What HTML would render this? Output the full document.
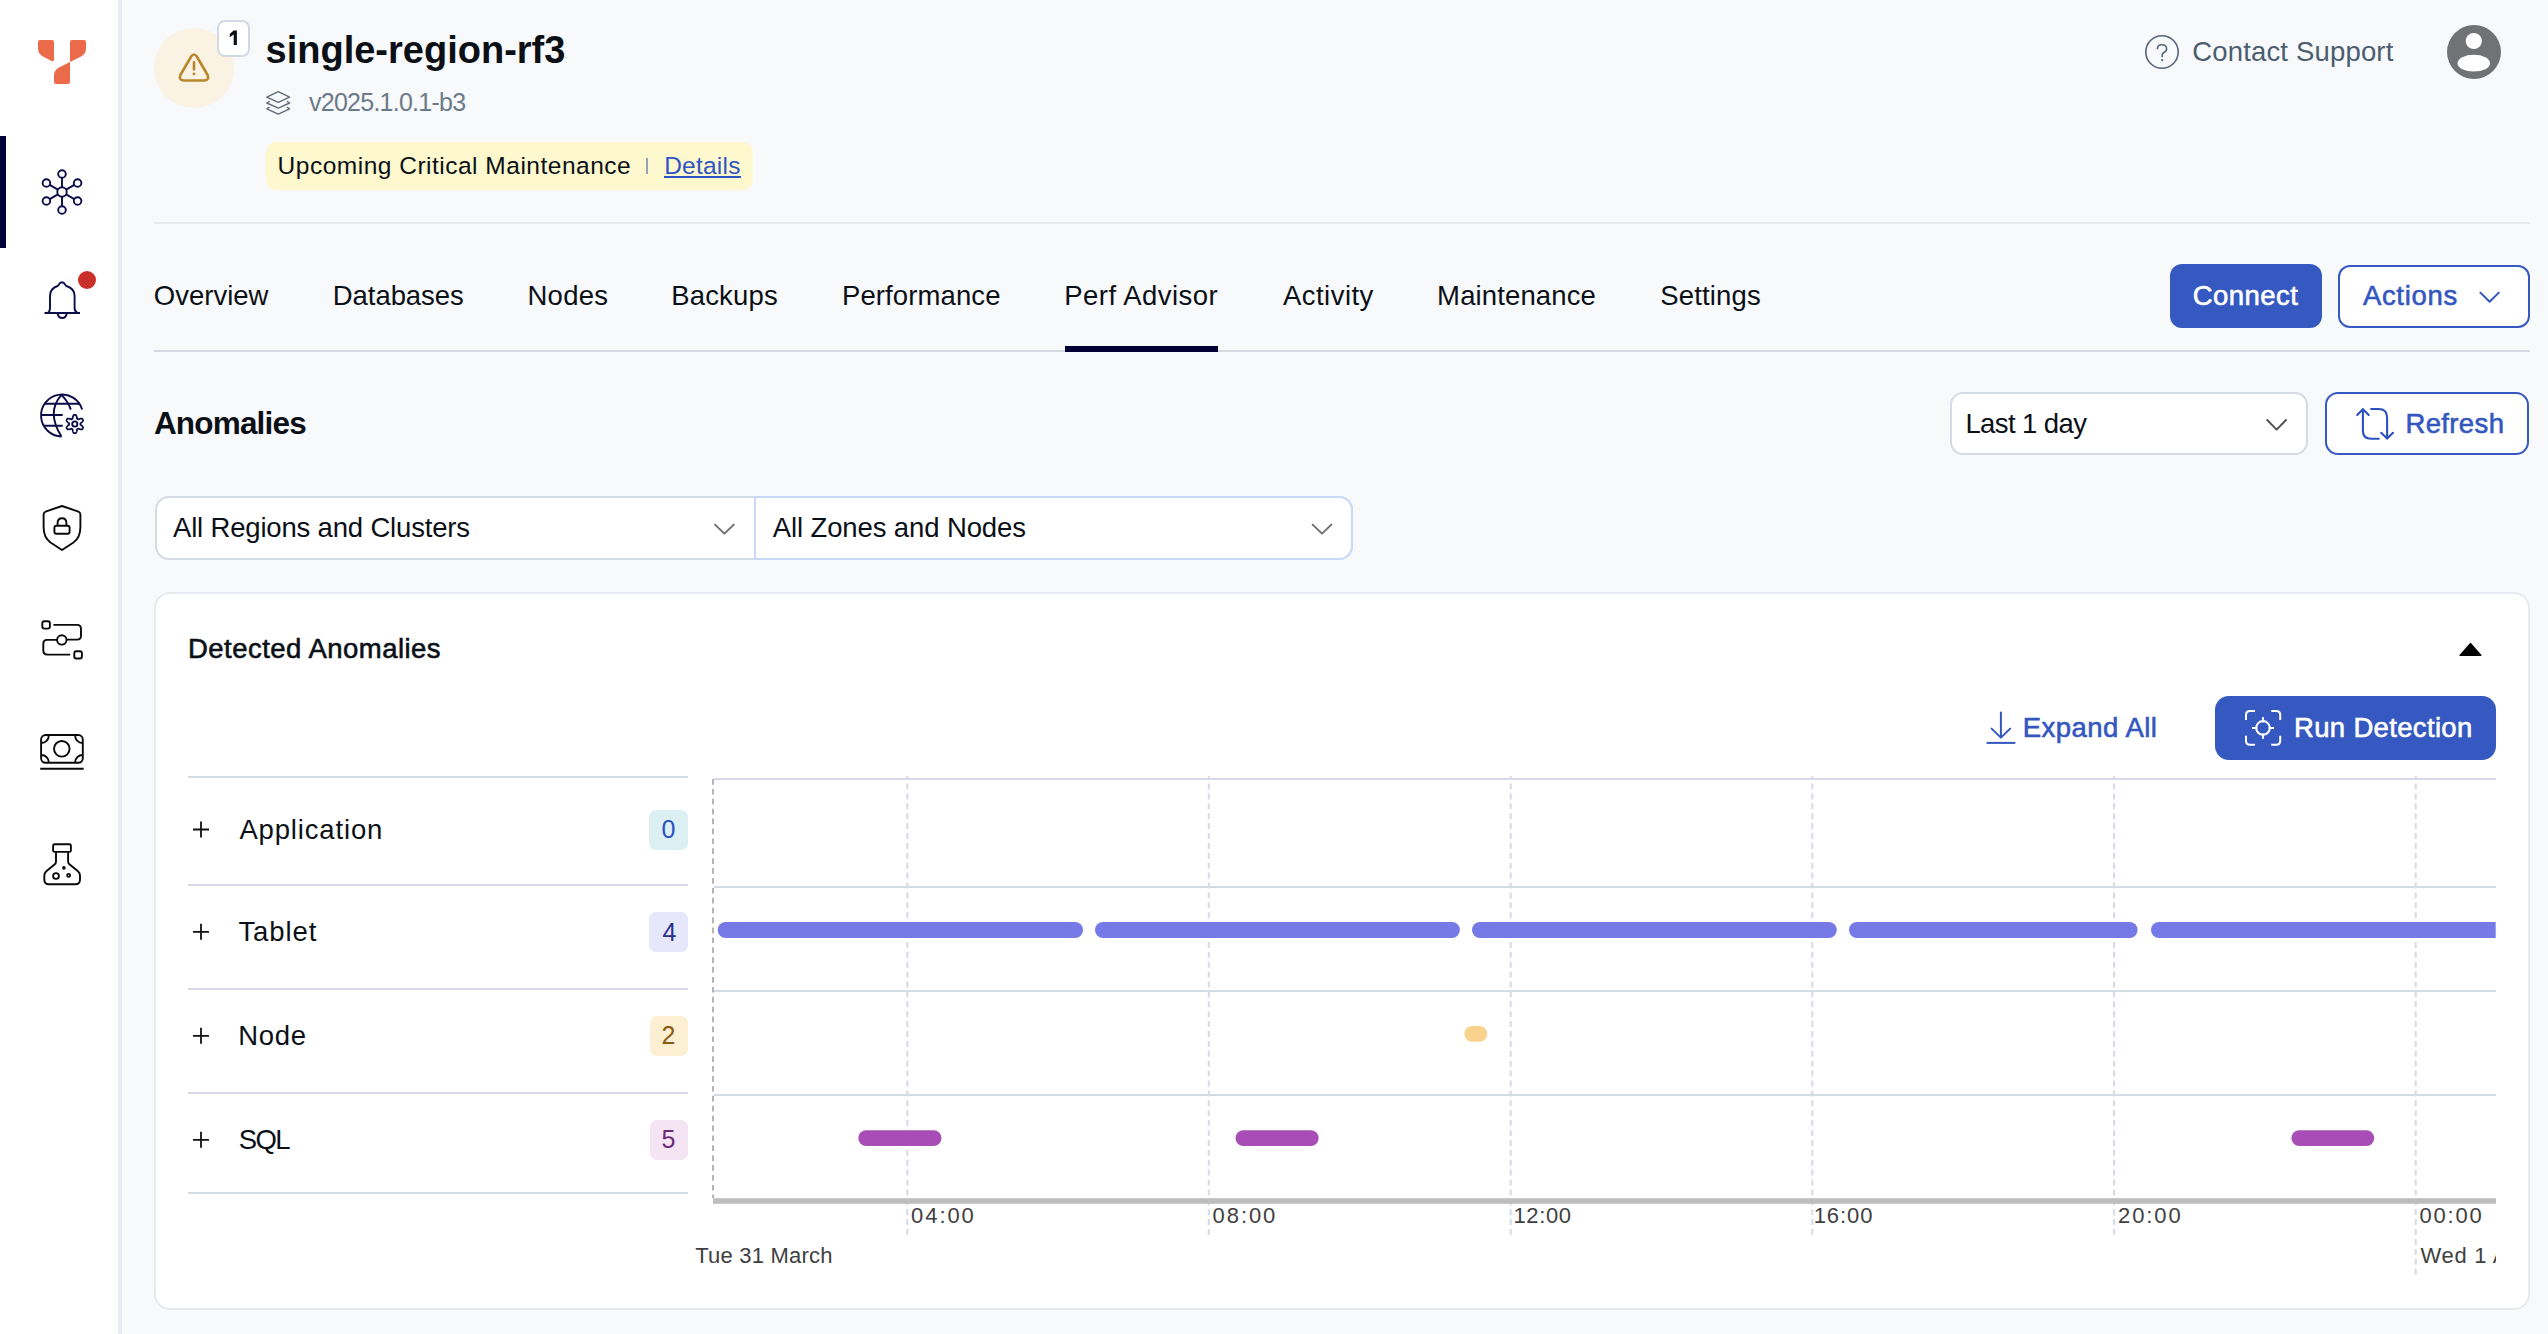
<!DOCTYPE html>
<html><head><meta charset="utf-8"><style>
html,body{margin:0;padding:0}
body{width:2548px;height:1334px;overflow:hidden;position:relative;background:#f8f9fb;font-family:"Liberation Sans",sans-serif}
.a{position:absolute;box-sizing:border-box}
.t{position:absolute;white-space:nowrap}
.ln{position:absolute;background:#d5dbe3}
.ov{position:absolute;left:0;top:0}
</style></head><body>
<div class="a" style="left:0;top:0;width:118px;height:1334px;background:#fff"></div>
<div class="a" style="left:118px;top:0;width:4px;height:1334px;background:#e8ebf0"></div>
<div class="a" style="left:0;top:136px;width:6px;height:112px;background:#03033c"></div>
<div class="a" style="left:154px;top:28px;width:80px;height:80px;border-radius:50%;background:#faf3e3"></div>
<div class="a" style="left:217px;top:20px;width:33px;height:37px;border-radius:8px;border:2px solid #d3d9e2;background:#fff"></div>
<div class="a" style="left:266px;top:142px;width:487px;height:48px;border-radius:10px;background:#fef8cf"></div>
<div class="a" style="left:646px;top:158px;width:2px;height:16px;background:#95a3b5"></div>
<div class="a" style="left:664.2px;top:176px;width:76.7px;height:2px;background:#2f55c4"></div>
<div class="a" style="left:154px;top:221.5px;width:2376px;height:2px;background:#e6e9ee"></div>
<div class="a" style="left:154px;top:350px;width:2376px;height:2px;background:#d5dae2"></div>
<div class="a" style="left:1065px;top:346px;width:153px;height:6px;background:#000037"></div>
<div class="a" style="left:2170px;top:264px;width:152px;height:64px;border-radius:12px;background:#3559c0"></div>
<div class="a" style="left:2338px;top:264.5px;width:191.5px;height:63px;border-radius:12px;border:2px solid #3559c0;background:#fff"></div>
<div class="a" style="left:1949.6px;top:392.4px;width:358.6px;height:62.3px;border-radius:13px;border:2px solid #d5dbe3;background:#fff"></div>
<div class="a" style="left:2325.2px;top:392.4px;width:204.3px;height:62.3px;border-radius:13px;border:2px solid #3559c0;background:#fff"></div>
<div class="a" style="left:154.5px;top:496px;width:1198.5px;height:64px;border-radius:14px;border:2px solid #d5dbe3;background:#fff"></div>
<div class="a" style="left:754px;top:496px;width:599px;height:64px;border-radius:0 14px 14px 0;border:2px solid #cad9fb;background:#fff"></div>
<div class="a" style="left:154.2px;top:592px;width:2375.8px;height:718.2px;border-radius:16px;border:2px solid #e6e9ee;background:#fff"></div>
<div class="a" style="left:2215px;top:696px;width:281px;height:63.6px;border-radius:14px;background:#3559c0"></div>
<div class="a" style="left:649px;top:810px;width:39px;height:40px;border-radius:7px;background:#dcf0f4"></div>
<div class="a" style="left:649px;top:912.2px;width:39px;height:39.5px;border-radius:7px;background:#e7e7fb"></div>
<div class="a" style="left:650px;top:1016px;width:38px;height:39.6px;border-radius:7px;background:#fdefd2"></div>
<div class="a" style="left:650px;top:1120px;width:38px;height:39.5px;border-radius:7px;background:#f4e4f4"></div>
<div class="ln" style="left:188px;top:775.6px;width:500px;height:2px"></div><div class="ln" style="left:188px;top:883.6px;width:500px;height:2px"></div><div class="ln" style="left:188px;top:987.8px;width:500px;height:2px"></div><div class="ln" style="left:188px;top:1091.7px;width:500px;height:2px"></div><div class="ln" style="left:188px;top:1191.9px;width:500px;height:2px"></div><div class="ln" style="left:714px;top:778.0px;width:1782px;height:2px"></div><div class="ln" style="left:714px;top:885.8px;width:1782px;height:2px"></div><div class="ln" style="left:714px;top:989.7px;width:1782px;height:2px"></div><div class="ln" style="left:714px;top:1093.7px;width:1782px;height:2px"></div>
<svg class="ov" width="2548" height="1334" viewBox="0 0 2548 1334"><g stroke="#d6dce5" stroke-width="2.1" stroke-dasharray="6 3.9" stroke-dashoffset="2.4"><path d="M907.3,776 V1236"/><path d="M1208.8,776 V1236"/><path d="M1510.7,776 V1236"/><path d="M1812.3,776 V1236"/><path d="M2114.1,776 V1236"/><path d="M2415.7,776 V1276"/></g><path d="M713,779 V1198" stroke="#b5b5b5" stroke-width="2" stroke-dasharray="5.7 4.2"/><rect x="713" y="1198.2" width="1783" height="5.6" fill="#bdbdbd"/><rect x="717.7" y="922" width="365.29999999999995" height="16" rx="8.0" fill="#767ae6"/><rect x="1095" y="922" width="364.9000000000001" height="16" rx="8.0" fill="#767ae6"/><rect x="1472" y="922" width="364.79999999999995" height="16" rx="8.0" fill="#767ae6"/><rect x="1849" y="922" width="288.5999999999999" height="16" rx="8.0" fill="#767ae6"/><path d="M2159.0,922 H2495.7 V938 H2159.0 A8.0,8.0 0 0 1 2159.0,922Z" fill="#767ae6"/><rect x="1464.4" y="1026" width="22.899999999999864" height="15.700000000000045" rx="7.850000000000023" fill="#f8d28e"/><rect x="858.3" y="1130.2" width="83.20000000000005" height="15.799999999999955" rx="7.899999999999977" fill="#a84db6"/><rect x="1235.5" y="1130.2" width="83.20000000000005" height="15.799999999999955" rx="7.899999999999977" fill="#a84db6"/><rect x="2291.4" y="1130.2" width="82.79999999999973" height="15.799999999999955" rx="7.899999999999977" fill="#a84db6"/></svg>

<svg class="ov" width="2548" height="1334" viewBox="0 0 2548 1334">
<!-- logo -->
<g fill="#ea6a4a">
<path d="M40,40 H52 Q54,40 54,42 V59.5 Q54,62 51.5,61 L43,56.6 Q38,54 38,48.5 V42 Q38,40 40,40Z"/>
<path d="M72,40 H84 Q86,40 86,42 V48.5 Q86,54 81,56.6 L70,62 V42 Q70,40 72,40Z"/>
<path d="M70,62 V82 Q70,84 68,84 H56 Q54,84 54,82 V75.5 Q54,70 59,67.6 Z"/>
</g>
<!-- cluster icon -->
<g fill="none" stroke="#0c0c48" stroke-width="1.9">
<circle cx="62" cy="192" r="4.7"/>
<circle cx="62" cy="174" r="3.8"/><circle cx="62" cy="210" r="3.8"/>
<circle cx="46.4" cy="183" r="3.8"/><circle cx="77.6" cy="183" r="3.8"/>
<circle cx="46.4" cy="201" r="3.8"/><circle cx="77.6" cy="201" r="3.8"/>
<path d="M62,177.8 V187.3 M62,196.7 V206.2 M49.7,184.9 L57.9,189.6 M66.1,194.4 L74.3,199.1 M74.3,184.9 L66.1,189.6 M57.9,194.4 L49.7,199.1"/>
</g>
<!-- bell -->
<g fill="none" stroke="#0c0c48" stroke-width="1.9" stroke-linejoin="round">
<path d="M44.5,313 H80"/>
<path d="M47.5,313 Q50,311.5 50,308 V296 Q50,288.5 57.5,286 Q58.5,285.6 58.8,284.6 Q60,282.2 62,282.2 Q64,282.2 65.2,284.6 Q65.5,285.6 66.5,286 Q74.6,288.5 74.6,296 V308 Q74.6,311.5 77.5,313"/>
<path d="M57.6,313.5 Q58.5,318 62.2,318 Q65.9,318 66.8,313.5"/>
</g>
<circle cx="87" cy="280" r="9" fill="#c9302a"/>
<!-- globe -->
<g fill="none" stroke="#0c0c48" stroke-width="1.9" stroke-linecap="butt">
<path d="M82.2,409.6 A21,21 0 1 0 61.5,436.5"/>
<path d="M61.5,394.8 Q46,412 61.5,436.5"/>
<path d="M61.5,394.8 Q68.5,402 70.8,409.6"/>
<path d="M44.7,403.7 H79.2 M41.2,415 H62.7 M44,425.8 H62.7"/>
<path d="M80.50,424.00 L80.50,423.85 L80.49,423.70 L80.48,423.55 L80.47,423.40 L80.65,423.23 L80.88,423.04 L81.13,422.83 L81.40,422.60 L81.67,422.35 L81.95,422.08 L82.21,421.80 L82.46,421.51 L82.68,421.21 L82.87,420.90 L83.02,420.59 L83.11,420.30 L83.01,420.08 L82.91,419.87 L82.80,419.66 L82.68,419.45 L82.56,419.25 L82.43,419.04 L82.30,418.85 L82.16,418.65 L81.86,418.58 L81.52,418.56 L81.16,418.57 L80.79,418.61 L80.41,418.68 L80.03,418.77 L79.66,418.87 L79.31,418.99 L78.98,419.11 L78.67,419.22 L78.39,419.32 L78.15,419.39 L78.03,419.30 L77.90,419.22 L77.78,419.14 L77.65,419.06 L77.52,418.99 L77.39,418.92 L77.25,418.86 L77.12,418.79 L77.06,418.55 L77.00,418.26 L76.95,417.93 L76.88,417.59 L76.81,417.22 L76.72,416.85 L76.61,416.48 L76.48,416.12 L76.32,415.78 L76.15,415.46 L75.96,415.17 L75.75,414.95 L75.51,414.93 L75.28,414.91 L75.04,414.90 L74.80,414.90 L74.56,414.90 L74.32,414.91 L74.09,414.93 L73.85,414.95 L73.64,415.17 L73.45,415.46 L73.28,415.78 L73.12,416.12 L72.99,416.48 L72.88,416.85 L72.79,417.22 L72.72,417.59 L72.65,417.93 L72.60,418.26 L72.54,418.55 L72.48,418.79 L72.35,418.86 L72.21,418.92 L72.08,418.99 L71.95,419.06 L71.82,419.14 L71.70,419.22 L71.57,419.30 L71.45,419.39 L71.21,419.32 L70.93,419.22 L70.62,419.11 L70.29,418.99 L69.94,418.87 L69.57,418.77 L69.19,418.68 L68.81,418.61 L68.44,418.57 L68.08,418.56 L67.74,418.58 L67.44,418.65 L67.30,418.85 L67.17,419.04 L67.04,419.25 L66.92,419.45 L66.80,419.66 L66.69,419.87 L66.59,420.08 L66.49,420.30 L66.58,420.59 L66.73,420.90 L66.92,421.21 L67.14,421.51 L67.39,421.80 L67.65,422.08 L67.93,422.35 L68.20,422.60 L68.47,422.83 L68.72,423.04 L68.95,423.23 L69.13,423.40 L69.12,423.55 L69.11,423.70 L69.10,423.85 L69.10,424.00 L69.10,424.15 L69.11,424.30 L69.12,424.45 L69.13,424.60 L68.95,424.77 L68.72,424.96 L68.47,425.17 L68.20,425.40 L67.93,425.65 L67.65,425.92 L67.39,426.20 L67.14,426.49 L66.92,426.79 L66.73,427.10 L66.58,427.41 L66.49,427.70 L66.59,427.92 L66.69,428.13 L66.80,428.34 L66.92,428.55 L67.04,428.75 L67.17,428.96 L67.30,429.15 L67.44,429.35 L67.74,429.42 L68.08,429.44 L68.44,429.43 L68.81,429.39 L69.19,429.32 L69.57,429.23 L69.94,429.13 L70.29,429.01 L70.62,428.89 L70.93,428.78 L71.21,428.68 L71.45,428.61 L71.57,428.70 L71.70,428.78 L71.82,428.86 L71.95,428.94 L72.08,429.01 L72.21,429.08 L72.35,429.14 L72.48,429.21 L72.54,429.45 L72.60,429.74 L72.65,430.07 L72.72,430.41 L72.79,430.78 L72.88,431.15 L72.99,431.52 L73.12,431.88 L73.28,432.22 L73.45,432.54 L73.64,432.83 L73.85,433.05 L74.09,433.07 L74.32,433.09 L74.56,433.10 L74.80,433.10 L75.04,433.10 L75.28,433.09 L75.51,433.07 L75.75,433.05 L75.96,432.83 L76.15,432.54 L76.32,432.22 L76.48,431.88 L76.61,431.52 L76.72,431.15 L76.81,430.78 L76.88,430.41 L76.95,430.07 L77.00,429.74 L77.06,429.45 L77.12,429.21 L77.25,429.14 L77.39,429.08 L77.52,429.01 L77.65,428.94 L77.78,428.86 L77.90,428.78 L78.03,428.70 L78.15,428.61 L78.39,428.68 L78.67,428.78 L78.98,428.89 L79.31,429.01 L79.66,429.13 L80.03,429.23 L80.41,429.32 L80.79,429.39 L81.16,429.43 L81.52,429.44 L81.86,429.42 L82.16,429.35 L82.30,429.15 L82.43,428.96 L82.56,428.75 L82.68,428.55 L82.80,428.34 L82.91,428.13 L83.01,427.92 L83.11,427.70 L83.02,427.41 L82.87,427.10 L82.68,426.79 L82.46,426.49 L82.21,426.20 L81.95,425.92 L81.67,425.65 L81.40,425.40 L81.13,425.17 L80.88,424.96 L80.65,424.77 L80.47,424.60 L80.48,424.45 L80.49,424.30 L80.50,424.15Z" stroke-linejoin="round" stroke-width="1.8"/>
<circle cx="74.8" cy="424" r="2.6"/>
</g>
<!-- shield -->
<g fill="none" stroke="#0a0a0a" stroke-width="1.9" stroke-linejoin="round">
<path d="M62,506 L45.6,511.6 Q43.6,512.4 43.6,514.6 V527 Q43.6,537.5 50.5,542.5 L62,550 L73.5,542.5 Q80.4,537.5 80.4,527 V514.6 Q80.4,512.4 78.4,511.6 Z"/>
<rect x="54.4" y="525.7" width="15.2" height="8" rx="2"/>
<path d="M57.6,525.5 V523 Q57.6,518.2 62,518.2 Q66.4,518.2 66.4,523 V525.5"/>
</g>
<!-- workflow -->
<g fill="none" stroke="#0a0a0a" stroke-width="1.9" stroke-linejoin="round">
<rect x="42.3" y="621.3" width="7.6" height="7.3" rx="2"/>
<rect x="74.3" y="651.2" width="7.6" height="7.3" rx="2"/>
<circle cx="61.8" cy="639.9" r="4.7"/>
<path d="M53.4,624.9 H77 Q81,624.9 81,628.9 V635.8 Q81,639.6 77,639.6 H66.5"/>
<path d="M57.1,639.9 H47 Q43.3,639.9 43.3,643.9 V650.6 Q43.3,654.6 47.3,654.6 H70.2"/>
</g>
<!-- money -->
<g fill="none" stroke="#0a0a0a" stroke-width="1.9">
<rect x="41.1" y="735" width="41.7" height="27.8" rx="4.5"/>
<circle cx="61.8" cy="748.8" r="7.8"/>
<path d="M48.8,735.5 A7.5,7.5 0 0 1 41.3,743 M75.1,735.5 A7.5,7.5 0 0 0 82.6,743 M48.8,762.5 A7.5,7.5 0 0 0 41.3,755 M75.1,762.5 A7.5,7.5 0 0 1 82.6,755"/>
<path d="M40.2,768.8 H83.7"/>
</g>
<!-- flask -->
<g fill="none" stroke="#0a0a0a" stroke-width="1.9" stroke-linejoin="round">
<rect x="53.1" y="844.3" width="17.8" height="7.6" rx="1.5"/>
<path d="M56,852.2 V861.5 Q56,863.4 54.5,864.6 L46.3,871.2 Q44.3,872.9 44.3,876 V879.5 Q44.3,884.3 49,884.3 H75.3 Q80,884.3 80,879.5 V876 Q80,872.9 78,871.2 L69.7,864.6 Q68.1,863.4 68.1,861.5 V852.2"/>
<circle cx="56" cy="876" r="2.9"/>
<circle cx="68.6" cy="875.4" r="1.5"/>
</g>
<circle cx="63.9" cy="867.9" r="1.8" fill="#0a0a0a"/>
<!-- warning -->
<g fill="none" stroke="#b8862b" stroke-width="2.6" stroke-linejoin="round" stroke-linecap="round">
<path d="M191.2,56.5 Q194,52.5 196.8,56.5 L207.6,75 Q209.6,80.5 203.8,80.5 H184.2 Q178.4,80.5 180.4,75 Z"/>
<path d="M194,62.4 V69.5"/>
</g>
<circle cx="194" cy="73.9" r="1.4" fill="#b8862b"/>
<path d="M233.6,30.6 H236.9 V45 H233.7 V34.5 L229.8,37.3 V34.1 Z" fill="#0b1017"/>
<!-- layers -->
<g fill="none" stroke="#5f6d7c" stroke-width="1.4" stroke-linejoin="round" stroke-linecap="round">
<path d="M278.3,91.7 L289.6,97.1 L278.3,102.3 L266.8,97.1 Z"/>
<path d="M269.2,101.6 L266.8,103 L278.3,108.2 L289.6,103 L287.4,101.6"/>
<path d="M269.2,107.4 L266.8,108.8 L278.3,114.1 L289.6,108.8 L287.4,107.4"/>
</g>
<!-- help -->
<g fill="none" stroke="#56657a" stroke-width="1.6" stroke-linecap="round">
<circle cx="2162" cy="52" r="16.2"/>
<path d="M2157.4,48.6 Q2157.6,44.8 2162,44.8 Q2166.6,44.8 2166.6,48.8 Q2166.6,51.4 2163.6,52.8 Q2162.2,53.6 2162.2,55.4 V56.4"/>
</g>
<circle cx="2162.2" cy="60.2" r="1.1" fill="#56657a"/>
<!-- avatar -->
<circle cx="2474" cy="52" r="27" fill="#707276"/>
<circle cx="2473.8" cy="41" r="8.1" fill="#fff"/>
<ellipse cx="2473.8" cy="63.2" rx="16.2" ry="8.4" fill="#fff"/>
<!-- chevrons -->
<g fill="none" stroke-width="2" stroke-linecap="round" stroke-linejoin="round">
<path d="M2480.4,292.6 L2489.6,301.8 L2498.8,292.6" stroke="#3357be"/>
<path d="M2267.2,420 L2276.6,429.6 L2286,420" stroke="#555"/>
<path d="M715,524.6 L724.4,533.6 L733.8,524.6" stroke="#6e6e6e" stroke-width="1.9"/>
<path d="M1312.6,524.6 L1322,533.6 L1331.4,524.6" stroke="#6e6e6e" stroke-width="1.9"/>
</g>
<!-- refresh -->
<g fill="none" stroke="#2c51bf" stroke-width="2.1" stroke-linecap="round" stroke-linejoin="round">
<path d="M2362.9,409.6 V430.5 Q2362.9,438.8 2371.2,438.8 H2378.8"/>
<path d="M2357.2,414.9 L2362.9,409.2 L2368.7,414.9"/>
<path d="M2371.1,409 H2378.6 Q2387.1,409 2387.1,417.5 V438.2"/>
<path d="M2381.2,432.8 L2387.1,438.6 L2393,432.8"/>
</g>
<!-- caret -->
<path d="M2470.5,643.5 L2481,655.4 H2460 Z" fill="#000" stroke="#000" stroke-width="1.2" stroke-linejoin="round"/>
<!-- expand -->
<g fill="none" stroke="#3357be" stroke-width="2" stroke-linecap="round" stroke-linejoin="round">
<path d="M2000.9,712.5 V736.8 M1991.6,728.6 L2000.9,737.6 L2010.2,728.6"/>
<path d="M1986.5,742.9 H2015.4" stroke-linecap="butt"/>
</g>
<!-- run detection -->
<g fill="none" stroke="#fff" stroke-width="2" stroke-linecap="butt" stroke-linejoin="round">
<path d="M2255,711 H2250 Q2246,711 2246,715 V720"/>
<path d="M2271.2,711 H2276.2 Q2280.2,711 2280.2,715 V720"/>
<path d="M2246,735.8 V740.8 Q2246,744.8 2250,744.8 H2255"/>
<path d="M2280.2,735.8 V740.8 Q2280.2,744.8 2276.2,744.8 H2271.2"/>
<circle cx="2263" cy="727.9" r="6.8"/>
<path d="M2263,717 V722.4 M2263,733.4 V738.8 M2252,727.9 H2257.4 M2268.6,727.9 H2274"/>
</g>
<!-- plus signs -->
<g stroke="#111" stroke-width="1.8">
<path d="M193,829.5 H209 M201,821.5 V837.5"/>
<path d="M193,931.8 H209 M201,923.8 V939.8"/>
<path d="M193,1035.8 H209 M201,1027.8 V1043.8"/>
<path d="M193,1139.8 H209 M201,1131.8 V1147.8"/>
</g>
</svg>

<div class="t" style="left:265.5px;top:31.3px;font-size:38.0px;line-height:38.0px;font-weight:700;letter-spacing:0.006px;color:#0b1017;">single-region-rf3</div>
<div class="t" style="left:309.0px;top:90.0px;font-size:25.0px;line-height:25.0px;font-weight:400;letter-spacing:-0.746px;color:#6b7a88;">v2025.1.0.1-b3</div>
<div class="t" style="left:277.6px;top:153.9px;font-size:24.5px;line-height:24.5px;font-weight:400;letter-spacing:0.5px;color:#0b1017;">Upcoming Critical Maintenance</div>
<div class="t" style="left:664.2px;top:153.8px;font-size:24.5px;line-height:24.5px;font-weight:400;letter-spacing:0.217px;color:#2f55c4;">Details</div>
<div class="t" style="left:2192.2px;top:38.2px;font-size:27.5px;line-height:27.5px;font-weight:400;letter-spacing:0.171px;color:#4b5d70;">Contact Support</div>
<div class="t" style="left:153.8px;top:282.0px;font-size:27.5px;line-height:27.5px;font-weight:400;letter-spacing:0.0px;color:#0b1017;">Overview</div>
<div class="t" style="left:332.8px;top:282.0px;font-size:27.5px;line-height:27.5px;font-weight:400;letter-spacing:-0.062px;color:#0b1017;">Databases</div>
<div class="t" style="left:527.4px;top:282.0px;font-size:27.5px;line-height:27.5px;font-weight:400;letter-spacing:0.3px;color:#0b1017;">Nodes</div>
<div class="t" style="left:671.2px;top:282.0px;font-size:27.5px;line-height:27.5px;font-weight:400;letter-spacing:0.183px;color:#0b1017;">Backups</div>
<div class="t" style="left:842.0px;top:282.0px;font-size:27.5px;line-height:27.5px;font-weight:400;letter-spacing:0.1px;color:#0b1017;">Performance</div>
<div class="t" style="left:1064.2px;top:282.0px;font-size:27.5px;line-height:27.5px;font-weight:400;letter-spacing:0.482px;color:#0b1017;">Perf Advisor</div>
<div class="t" style="left:1283.0px;top:282.0px;font-size:27.5px;line-height:27.5px;font-weight:400;letter-spacing:0.457px;color:#0b1017;">Activity</div>
<div class="t" style="left:1437.1px;top:282.0px;font-size:27.5px;line-height:27.5px;font-weight:400;letter-spacing:0.13px;color:#0b1017;">Maintenance</div>
<div class="t" style="left:1660.3px;top:282.0px;font-size:27.5px;line-height:27.5px;font-weight:400;letter-spacing:0.157px;color:#0b1017;">Settings</div>
<div class="t" style="left:2192.7px;top:281.9px;font-size:27.5px;line-height:27.5px;font-weight:400;-webkit-text-stroke:0.6px #ffffff;letter-spacing:0.467px;color:#ffffff;">Connect</div>
<div class="t" style="left:2362.9px;top:281.9px;font-size:27.5px;line-height:27.5px;font-weight:400;-webkit-text-stroke:0.6px #3357be;letter-spacing:0.683px;color:#3357be;">Actions</div>
<div class="t" style="left:153.9px;top:407.9px;font-size:31.5px;line-height:31.5px;font-weight:700;letter-spacing:-0.813px;color:#0b1017;">Anomalies</div>
<div class="t" style="left:1965.4px;top:410.1px;font-size:27.5px;line-height:27.5px;font-weight:400;letter-spacing:-0.6px;color:#0b1017;">Last 1 day</div>
<div class="t" style="left:2405.4px;top:410.0px;font-size:27.5px;line-height:27.5px;font-weight:400;-webkit-text-stroke:0.6px #3357be;letter-spacing:0.383px;color:#3357be;">Refresh</div>
<div class="t" style="left:173.0px;top:514.3px;font-size:27.5px;line-height:27.5px;font-weight:400;letter-spacing:-0.178px;color:#0b1017;">All Regions and Clusters</div>
<div class="t" style="left:772.7px;top:514.4px;font-size:27.5px;line-height:27.5px;font-weight:400;letter-spacing:-0.111px;color:#0b1017;">All Zones and Nodes</div>
<div class="t" style="left:188.0px;top:635.3px;font-size:27.5px;line-height:27.5px;font-weight:400;-webkit-text-stroke:0.6px #0b1017;letter-spacing:0.471px;color:#0b1017;">Detected Anomalies</div>
<div class="t" style="left:2022.7px;top:713.9px;font-size:27.5px;line-height:27.5px;font-weight:400;-webkit-text-stroke:0.6px #3357be;letter-spacing:0.478px;color:#3357be;">Expand All</div>
<div class="t" style="left:2294.0px;top:713.9px;font-size:27.5px;line-height:27.5px;font-weight:400;-webkit-text-stroke:0.6px #ffffff;letter-spacing:0.333px;color:#ffffff;">Run Detection</div>
<div class="t" style="left:239.4px;top:816.2px;font-size:27.5px;line-height:27.5px;font-weight:400;letter-spacing:0.84px;color:#0b1017;">Application</div>
<div class="t" style="left:238.4px;top:918.1px;font-size:27.5px;line-height:27.5px;font-weight:400;letter-spacing:0.92px;color:#0b1017;">Tablet</div>
<div class="t" style="left:238.2px;top:1022.1px;font-size:27.5px;line-height:27.5px;font-weight:400;letter-spacing:0.7px;color:#0b1017;">Node</div>
<div class="t" style="left:238.8px;top:1126.1px;font-size:27.5px;line-height:27.5px;font-weight:400;letter-spacing:-1.6px;color:#0b1017;">SQL</div>
<div class="t" style="left:661.4px;top:817.0px;font-size:25.0px;line-height:25.0px;font-weight:400;letter-spacing:0px;color:#2b50c0;">0</div>
<div class="t" style="left:662.4px;top:919.5px;font-size:25.0px;line-height:25.0px;font-weight:400;letter-spacing:0px;color:#2a2f8a;">4</div>
<div class="t" style="left:661.4px;top:1023.3px;font-size:25.0px;line-height:25.0px;font-weight:400;letter-spacing:0px;color:#8a5a12;">2</div>
<div class="t" style="left:661.4px;top:1127.3px;font-size:25.0px;line-height:25.0px;font-weight:400;letter-spacing:0px;color:#6b2a78;">5</div>
<div class="t" style="left:911.1px;top:1204.8px;font-size:22.0px;line-height:22.0px;font-weight:400;letter-spacing:1.925px;color:#404040;">04:00</div>
<div class="t" style="left:1212.6px;top:1204.8px;font-size:22.0px;line-height:22.0px;font-weight:400;letter-spacing:1.925px;color:#404040;">08:00</div>
<div class="t" style="left:1513.4px;top:1204.8px;font-size:22.0px;line-height:22.0px;font-weight:400;letter-spacing:0.65px;color:#404040;">12:00</div>
<div class="t" style="left:1813.7px;top:1204.8px;font-size:22.0px;line-height:22.0px;font-weight:400;letter-spacing:0.95px;color:#404040;">16:00</div>
<div class="t" style="left:2118.0px;top:1204.8px;font-size:22.0px;line-height:22.0px;font-weight:400;letter-spacing:1.925px;color:#404040;">20:00</div>
<div class="t" style="left:2419.4px;top:1204.8px;font-size:22.0px;line-height:22.0px;font-weight:400;letter-spacing:1.85px;color:#404040;">00:00</div>
<div class="t" style="left:695.2px;top:1245.0px;font-size:22.0px;line-height:22.0px;font-weight:400;letter-spacing:0.209px;color:#404040;">Tue 31 March</div>
<div class="a" style="left:2400px;top:1240px;width:96px;height:40px;overflow:hidden"><div class="t" style="left:20.5px;top:5px;font-size:22px;line-height:22px;color:#404040;letter-spacing:0.7px">Wed 1 April</div></div>
</body></html>
